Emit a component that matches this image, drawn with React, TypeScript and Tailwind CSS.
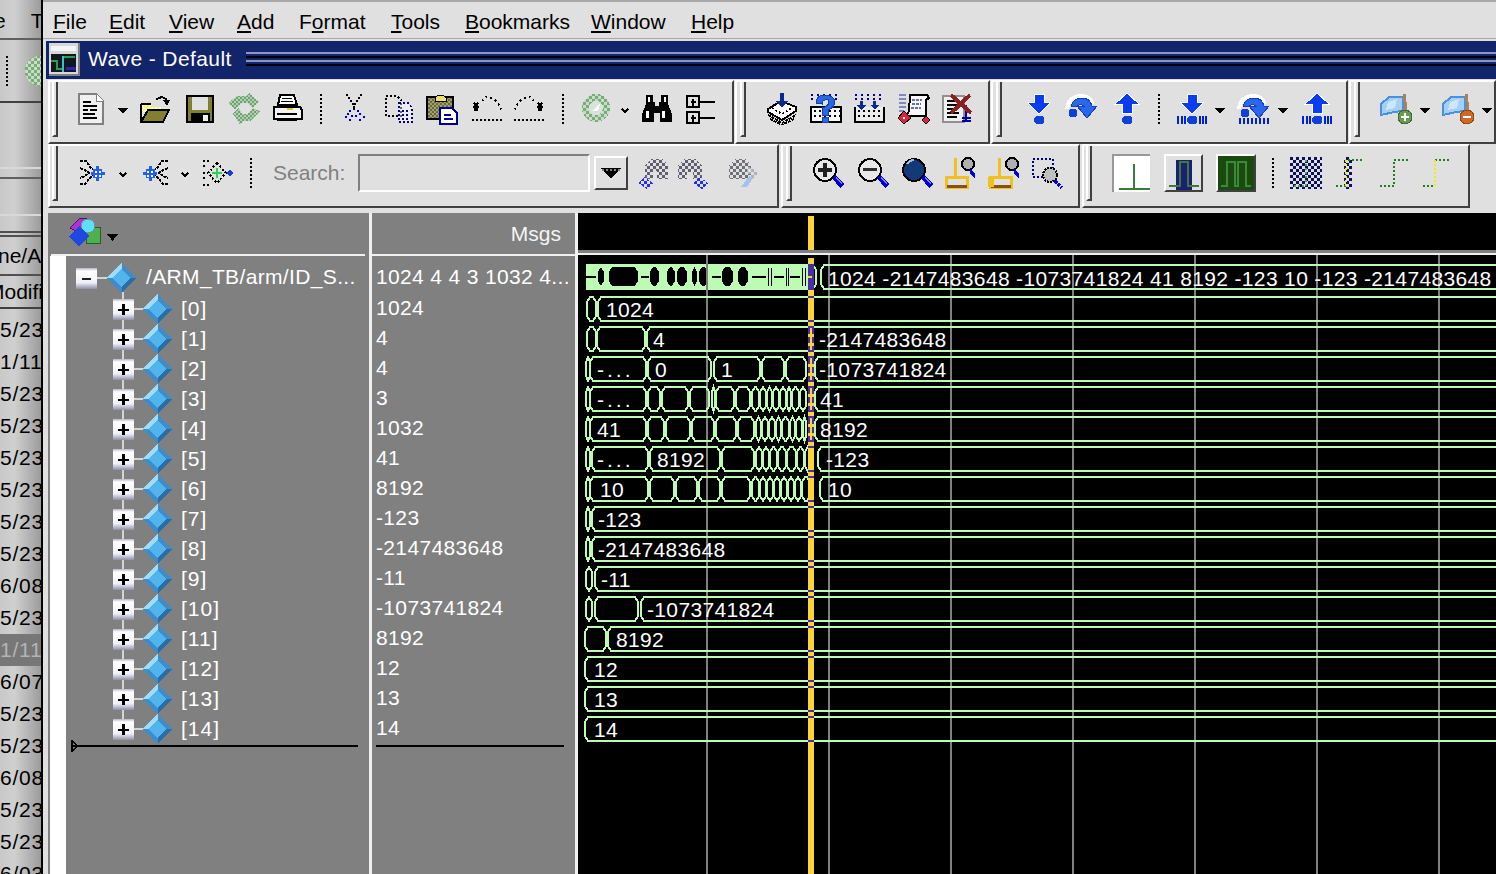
import React from "react";

const K = "#000";
const Pat = ({ id, c, s = 2 }: { id: string; c: string; s?: number }) => (
  <defs>
    <pattern id={id} width={s * 2} height={s * 2} patternUnits="userSpaceOnUse">
      <rect width={s} height={s} fill={c} />
      <rect x={s} y={s} width={s} height={s} fill={c} />
    </pattern>
  </defs>
);

const Ic = ({ className = "", children, w = 32, h = 32 }: { className?: string; children?: React.ReactNode; w?: number; h?: number }) => (
  <svg width={w} height={h} viewBox={`0 0 ${w} ${h}`} shapeRendering="crispEdges" className={`shrink-0 ${className}`}>
    {children}
  </svg>
);
type P = { className?: string };

const Dd = ({ className = "" }: P) => (
  <Ic w={10} h={8} className={`self-center mt-[4px] ${className}`}><path d="M0 1h10L5 7z" fill={K} /></Ic>
);
const DdS = ({ className = "" }: P) => (
  <Ic w={10} h={8} className={`self-center mt-[4px] ${className}`}><path d="M2 2l3 3 3-3" fill="none" stroke={K} strokeWidth="1.5" /></Ic>
);
const Sep = ({ className = "" }: P) => (
  <div className={`w-[2px] h-[30px] border-l-2 border-dotted border-black shrink-0 ${className}`} />
);

const New = (p: P) => (
  <Ic {...p}>
    <path d="M4 1h17l7 7v23H4z" fill="#f0f0f0" stroke="#808080" strokeWidth="2" />
    <path d="M8 8h8v2H8zM8 12h14v2H8zM8 16h5v2H8zM15 16h7v2h-7zM8 20h12v2H8zM8 24h14v2H8z" fill={K} />
    <path d="M21 1v7h7" fill="#fff" stroke="#808080" />
  </Ic>
);
const Open = (p: P) => (
  <Ic {...p}>
    <Pat id="oy" c="#ffff40" />
    <path d="M2 11h10l2 3h8v5H2z" fill="#fff" />
    <path d="M2 11h10l2 3h8v5H2z" fill="url(#oy)" />
    <path d="M2 29l7-12h21l-6 12z" fill="#808030" stroke={K} strokeWidth="2" />
    <path d="M2 11v18M2 11h10" stroke={K} strokeWidth="2" fill="none" />
    <path d="M17 7q5-5 10-1l1 4" stroke={K} strokeWidth="2" fill="none" />
    <path d="M24 7h7l-3 6z" fill={K} />
  </Ic>
);
const Save = (p: P) => (
  <Ic {...p}>
    <rect x="3" y="3" width="26" height="26" fill="#808030" stroke={K} strokeWidth="2" />
    <rect x="8" y="4" width="16" height="13" fill="#e0e0e0" />
    <rect x="7" y="20" width="19" height="9" fill={K} />
    <rect x="19" y="22" width="5" height="6" fill="#f0f0f0" />
  </Ic>
);
const Reload = (p: P) => (
  <Ic {...p}>
    <Pat id="rg" c="#6fa470" />
    <path d="M0 10l9-7h9l3-3 6 6 4 2-7 7-4-5h-7l-6 6z" fill="#b4d0b4" />
    <path d="M0 10l9-7h9l3-3 6 6 4 2-7 7-4-5h-7l-6 6z" fill="url(#rg)" />
    <path d="M4 21l7-6 3 6h5l6-6 7 3-10 10h-7l-3 4-4-7z" fill="#b4d0b4" />
    <path d="M4 21l7-6 3 6h5l6-6 7 3-10 10h-7l-3 4-4-7z" fill="url(#rg)" />
  </Ic>
);
const Print = (p: P) => (
  <Ic {...p}>
    <path d="M8 2h14l3 10H6z" fill="#fff" stroke={K} strokeWidth="2" />
    <path d="M10 5h10M9 8h12" stroke={K} />
    <path d="M2 14h26l2 3v9H2z" fill="#f4f4f4" stroke={K} strokeWidth="2" />
    <path d="M5 20h20v2H5z" fill={K} />
    <rect x="15" y="15" width="6" height="2" fill="#e8c830" />
    <path d="M5 26h20v2H5z" fill={K} />
  </Ic>
);
const Cut = (p: P) => (
  <Ic {...p}>
    <path d="M9 1v2M11 4v2M13 7v2M15 10v2M23 1v2M21 4v2M19 7v2M17 10v2" stroke={K} strokeWidth="2" />
    <path d="M15 13h2v4h-2z" fill={K} />
    <path d="M11 17h2v2h-2zM9 20h2v2H9zM7 23h2v2H7zM11 26h2v2h-2zM13 22h2v2h-2zM19 17h2v2h-2zM21 20h2v2h-2zM25 23h2v2h-2zM21 26h2v2h-2zM17 22h2v2h-2z" fill="#0000c0" />
  </Ic>
);
const Copy = (p: P) => (
  <Ic {...p}>
    <path d="M3 3h11l4 4v16H3z" fill="none" stroke={K} strokeWidth="2" strokeDasharray="2 2" />
    <path d="M16 10h9l4 5v14H16z" fill="#fff" opacity=".4" />
    <path d="M16 10h9l4 5v14H16z" fill="none" stroke="#000080" strokeWidth="2" strokeDasharray="2 2" />
    <path d="M19 18h8M19 22h8M19 26h8" stroke="#000080" strokeWidth="2" strokeDasharray="2 2" />
  </Ic>
);
const Paste = (p: P) => (
  <Ic {...p}>
    <Pat id="pg" c="#6b6b3a" />
    <rect x="1" y="4" width="26" height="22" fill="#a0a070" stroke={K} strokeWidth="2" />
    <rect x="2" y="5" width="24" height="20" fill="url(#pg)" />
    <path d="M9 5l3-3h5l3 3v3H9z" fill="#f0e070" stroke={K} />
    <path d="M14 15h12l5 5v11H14z" fill="#fff" stroke="#000090" strokeWidth="2" />
    <path d="M18 22h7M18 26h9" stroke="#000090" strokeWidth="2" />
  </Ic>
);
const Undo = (p: P) => (
  <Ic {...p}>
    <path d="M3 10l4 4-4 4M7 10l-4 4 4 4" stroke={K} fill="none" strokeWidth="1.5" />
    <path d="M11 8l4-4h4l6 4 4 5 1 4" fill="none" stroke={K} strokeWidth="2" strokeDasharray="2 3" />
    <path d="M1 27h30" stroke={K} strokeWidth="2" strokeDasharray="2 2" />
  </Ic>
);
const Redo = (p: P) => (
  <Ic {...p}>
    <path d="M29 10l-4 4 4 4M25 10l4 4-4 4" stroke={K} fill="none" strokeWidth="1.5" />
    <path d="M21 8l-4-4h-4L7 8l-4 5-1 4" fill="none" stroke={K} strokeWidth="2" strokeDasharray="2 3" />
    <path d="M1 27h30" stroke={K} strokeWidth="2" strokeDasharray="2 2" />
  </Ic>
);
const GreenBall = (p: P) => (
  <Ic {...p}>
    <Pat id="gb" c="#78ad78" s={3} />
    <circle cx="16" cy="15" r="14" fill="#c8dcc8" />
    <circle cx="16" cy="15" r="14" fill="url(#gb)" />
    <circle cx="16" cy="15" r="7" fill="#d8e4d8" />
    <path d="M12 18l8-7-2 7z" fill="#fff" />
  </Ic>
);
const Bino = (p: P) => (
  <Ic {...p}>
    <path d="M5 2h7v7h2v4h4V9h2V2h7v9l4 10v8H19v-9h-6v9H1v-8l4-10z" fill={K} />
    <path d="M7 4h2v5H7zM23 4h2v5h-2zM5 18h3v7H5zM21 18h3v7h-3z" fill="#fff" />
  </Ic>
);
const Grp = (p: P) => (
  <Ic {...p}>
    <rect x="3" y="3" width="12" height="11" fill="none" stroke={K} strokeWidth="2" />
    <rect x="3" y="19" width="12" height="11" fill="none" stroke={K} strokeWidth="2" />
    <path d="M7 8h5v2H7zM8 6h2v7H8zM7 24h5v2H7zM8 22h2v7H8zM15 8h16v2H15zM15 24h16v2H15z" fill={K} />
  </Ic>
);
const Stack = (p: P) => (
  <Ic {...p}>
    <path d="M2 16l13-8 15 6v4l-14 9-14-8z" fill="#fff" stroke={K} strokeWidth="2" />
    <path d="M2 22l14 8 14-8M4 26l12 6 12-6" fill="none" stroke={K} strokeWidth="2" strokeDasharray="3 1" />
    <path d="M6 15l10 6 10-6" fill="none" stroke={K} strokeWidth="2" strokeDasharray="2 2" />
    <path d="M14 0h4v8h4l-6 7-6-7h4z" fill="#0a2a90" />
  </Ic>
);
const Help = (p: P) => (
  <Ic {...p}>
    <path d="M1 14h30v15H1z" fill="#f8f8f8" stroke={K} strokeWidth="2" />
    <path d="M4 18h26M4 23h26" stroke={K} strokeWidth="2" strokeDasharray="2 3" />
    <path d="M1 2h30M1 6h30" stroke="#0000a0" strokeWidth="2" strokeDasharray="2 4" />
    <path d="M6 10q0-8 9-8t10 7q0 5-7 8v5h-6v-7q7-2 7-6t-4-2q-3 0-3 4z" fill="#2a68e0" stroke="#1040b0" />
    <rect x="12" y="24" width="6" height="5" fill="#2a68e0" stroke="#1040b0" />
  </Ic>
);
const Grid = (p: P) => (
  <Ic {...p}>
    <path d="M2 14v15h29V14" fill="#fff" fillOpacity=".4" stroke={K} strokeWidth="2" />
    <path d="M5 18h24M5 23h24" stroke={K} strokeWidth="2" strokeDasharray="2 3" />
    <path d="M2 2h29M2 6h29" stroke="#0000a0" strokeWidth="2" strokeDasharray="2 4" />
    <path d="M7 8h3v4h3l-5 5-4-5h3zM20 8h3v4h3l-4 5-5-5h3z" fill="#0a2a90" />
  </Ic>
);
const Scroll = (p: P) => (
  <Ic {...p}>
    <path d="M1 2h7M1 6h7M1 10h7M1 14h7M1 18h5" stroke="#8088c0" strokeWidth="2" />
    <path d="M12 2h17l2 3-3 2v16H8l3-5z" fill="#f8f8f8" stroke={K} strokeWidth="2" />
    <path d="M14 7h10M14 11h9M13 15h10" stroke="#6070b0" strokeWidth="2" strokeDasharray="3 1" />
    <path d="M0 25l6-7 7 7-7 6zM24 27l4-4 4 4-4 4z" fill="#e02040" stroke={K} />
    <rect x="5" y="24" width="2" height="2" fill="#fff" />
  </Ic>
);
const DelDoc = (p: P) => (
  <Ic {...p}>
    <rect x="1" y="3" width="21" height="26" fill="#f0f0f0" stroke="#909090" strokeWidth="2" />
    <path d="M5 8h10M5 12h14M5 16h8M5 20h12M5 24h10" stroke={K} strokeWidth="2" />
    <path d="M24 12v15M20 25h9M20 28h9" stroke="#0000a0" strokeWidth="2" />
    <path d="M9 2l20 18M28 2L9 20" stroke="#8a2020" strokeWidth="4" />
  </Ic>
);

const ArrowDown = () => (
  <path d="M11 1h10v8h7L16 21 4 9h7z" fill="#0a3cf0" stroke="#fff" strokeWidth="1" />
);
const ArrowUp = () => (
  <path d="M16 0l12 11h-7v9H11v-9H4z" fill="#0a3cf0" stroke="#fff" strokeWidth="1" />
);
const Dot = () => <path d="M13 23h6l2 2v4l-2 2h-6l-2-2v-4z" fill="#1040d8" />;
const Bars = ({ d }: { d: string }) => <path d={d} stroke="#0020e0" strokeWidth="2" />;
const Over = () => (
  <g>
    <path d="M2 16q2-13 14-13 9 0 12 8" fill="none" stroke="#fff" strokeWidth="4" />
    <path d="M6 13q3-8 11-8t10 8h5L22 25l-10-12h7q-4-3-8 1z" fill="#2a66ee" stroke="#1040c0" />
    <circle cx="8" cy="20" r="4.5" fill="#1040d8" />
  </g>
);
const StepD = (p: P) => <Ic {...p}><ArrowDown /><Dot /></Ic>;
const StepO = (p: P) => <Ic {...p}><Over /></Ic>;
const StepU = (p: P) => <Ic {...p}><ArrowUp /><Dot /></Ic>;
const StepDB = (p: P) => <Ic {...p}><ArrowDown /><Dot /><Bars d="M2 23v8M6 23v8M9 23v8M24 23v8M27 23v8M30 23v8" /></Ic>;
const StepOB = (p: P) => <Ic {...p}><Over /><Bars d="M3 25v6M7 25v6M11 25v6M15 25v6M19 25v6M23 25v6M27 25v6M31 25v6" /></Ic>;
const StepUB = (p: P) => <Ic {...p}><ArrowUp /><Dot /><Bars d="M2 23v8M6 23v8M9 23v8M24 23v8M27 23v8M30 23v8" /></Ic>;

const Flag = ({ c, d, minus, className = "" }: { c: string; d: string; minus?: boolean; className?: string }) => (
  <Ic className={className}>
    <path d="M1 11l8-7h14v14l-9 1-13 3z" fill="#a4d0f6" stroke="#4a90e0" strokeWidth="2" />
    <path d="M8 9l9-3-2 9-9 2z" fill="#cce6fa" />
    <path d="M23 1h3l1 16h-3z" fill="#a8825a" />
    <circle cx="25" cy="24" r="7" fill={c} stroke={d} />
    {minus ? <path d="M21 23h8v2h-8z" fill="#fff" /> : <path d="M21 23h8v2h-8zM24 20h2v8h-2z" fill="#fff" />}
  </Ic>
);

const Chev = ({ flip }: { flip?: boolean }) => (
  <g transform={flip ? "translate(32 0) scale(-1 1)" : undefined}>
    <path d="M3 4h6l5 7 4 3M3 11l5 2 4 3-4 3-5 2M3 27h5l5-6 4-3" fill="none" stroke={K} strokeWidth="2" strokeDasharray="3 1" />
    <path d="M16 12h3v-3h3v3h3v3h3v3h-3v3h-3v3h-3v-3h-3v-3h-2v-3h2z" fill="#2060f0" />
    <path d="M18 14h2v2h-2zM22 14h2v2h-2zM18 18h2v2h-2zM22 18h2v2h-2z" fill="#fff" />
  </g>
);
const Merge = (p: P) => <Ic {...p}><Chev /></Ic>;
const Split = (p: P) => <Ic {...p}><Chev flip /></Ic>;
const Third = (p: P) => (
  <Ic {...p}>
    <path d="M2 4h8M2 9h4M2 21h4M2 28h8" stroke={K} strokeWidth="2" strokeDasharray="2 2" />
    <path d="M16 6l9 10-9 10-9-10z" fill="none" stroke={K} strokeWidth="2" strokeDasharray="2 2" />
    <path d="M16 11v10M11 16h10" stroke="#30d050" strokeWidth="2" />
    <path d="M2 16h5" stroke={K} strokeWidth="2" strokeDasharray="2 2" />
    <path d="M25 16l4-3 3 3-3 3z" fill="#1040e0" />
  </Ic>
);
const S1 = (p: P) => (
  <Ic {...p}>
    <Pat id="s1" c="#606070" s={3} /><Pat id="s1b" c="#2030f0" s={3} />
    <path d="M7 8l6-6h11l6 6v14H19v-8h-4v8H7z" fill="url(#s1)" />
    <path d="M0 26l6-6 9 6-6 6z" fill="url(#s1b)" />
  </Ic>
);
const S2 = (p: P) => (
  <Ic {...p}>
    <Pat id="s2" c="#606070" s={3} /><Pat id="s2b" c="#2030f0" s={3} />
    <path d="M2 8l6-6h11l7 6v14h-9v-7h-6v7H2z" fill="url(#s2)" />
    <path d="M17 26l7-6 8 6-6 6z" fill="url(#s2b)" />
  </Ic>
);
const S3 = (p: P) => (
  <Ic {...p}>
    <Pat id="s3" c="#707078" s={3} /><Pat id="s3b" c="#b0b0b8" s={3} />
    <path d="M2 8l6-6h11l5 6v14H2z" fill="url(#s3)" />
    <path d="M20 10l6 1 6 6-8 7v-7h-4z" fill="url(#s3b)" />
    <path d="M14 30l8-11 4 2-6 9z" fill="#a8c0f0" />
  </Ic>
);
const Mag = ({ fill, children, className = "" }: { fill: string; children?: React.ReactNode; className?: string }) => (
  <Ic className={className}>
    <circle cx="13" cy="13" r="11" fill={fill} stroke={K} strokeWidth="2" />
    {children}
    <path d="M20 21l3-3 9 9-4 4z" fill="#0000d0" />
    <path d="M23 21l1-1 6 6-1 1z" fill="#8080e0" />
  </Ic>
);
const ZoomPlus = (p: P) => (
  <Mag fill="#e8e8e8" className={p.className}><path d="M6 11h14v4H6zM11 6h4v14h-4z" fill="#202020" /></Mag>
);
const ZoomMinus = (p: P) => (
  <Mag fill="#e8e8e8" className={p.className}><path d="M6 11h14v3H6z" fill="#303030" /></Mag>
);
const ZoomFull = (p: P) => (
  <Mag fill="#123a78" className={p.className}><path d="M6 7q3-4 7-4" stroke="#a0b8e0" strokeWidth="2" fill="none" /></Mag>
);
const YT = ({ a, className = "" }: { a?: boolean; className?: string }) => (
  <Ic className={className}>
    <path d="M10 1h3v19h-3z" fill="#f0c020" />
    <rect x="2" y="20" width="21" height="10" fill="none" stroke="#f0c020" strokeWidth="3" />
    <path d="M3 29h20" stroke="#8a5010" strokeWidth="3" />
    <circle cx="24" cy="7" r="6" fill="#b0b0b0" stroke={K} strokeWidth="2" />
    <path d="M26 12l5 5v4l-5-4z" fill="#0000e0" />
    {a && <path d="M0 20h6v10H0z" fill="#f0c020" />}
  </Ic>
);
const Marq = (p: P) => (
  <Ic {...p}>
    <rect x="2" y="2" width="20" height="18" fill="none" stroke="#000090" strokeWidth="2" strokeDasharray="2 2" />
    <circle cx="19" cy="18" r="7" fill="#c0c0c0" stroke={K} strokeWidth="2" strokeDasharray="2 1" />
    <path d="M24 24l7 7" stroke="#0000e0" strokeWidth="3" strokeDasharray="3 1" />
  </Ic>
);
const DotsA = (p: P) => (
  <Ic {...p}>
    <Pat id="da" c="#101060" s={3} />
    <rect width="32" height="32" fill="url(#da)" />
    <path d="M16 3v26H2" stroke="#50a050" strokeWidth="2" strokeDasharray="2 2" fill="none" />
  </Ic>
);
const DotsB = (p: P) => (
  <Ic {...p}>
    <Pat id="db" c="#101060" s={3} />
    <rect x="10" y="0" width="8" height="32" fill="url(#db)" />
    <path d="M2 29h10M14 3h16" stroke="#208020" strokeWidth="2" strokeDasharray="2 2" />
    <path d="M12 3v27" stroke="#f0f000" strokeWidth="2" strokeDasharray="2 2" />
  </Ic>
);
const DotsC = (p: P) => (
  <Ic {...p}><path d="M2 29h14V3h16" fill="none" stroke="#208020" strokeWidth="2" strokeDasharray="2 2" /></Ic>
);
const DotsD = (p: P) => (
  <Ic {...p}>
    <path d="M2 29h12M14 3h16" stroke="#208020" strokeWidth="2" strokeDasharray="2 2" />
    <path d="M14 3v26" stroke="#f0f000" strokeWidth="2" strokeDasharray="2 2" />
  </Ic>
);

const Handle = ({ className = "" }: P) => (
  <div className={`w-[6px] h-[55px] shrink-0 border-l-2 border-white border-r-2 border-r-[#404040] border-b-2 border-b-[#404040] ${className}`} />
);
const grp = "flex items-center pb-[6px] border-t-2 border-l-2 border-t-white border-l-white border-b-2 border-r-2 border-b-[#404040] border-r-[#404040] shrink-0 overflow-hidden";

const Left = () => {
  const dates = ["5/23","1/11","5/23","5/23","5/23","5/23","5/23","5/23","6/08","5/23","1/11","6/07","5/23","5/23","6/08","5/23","5/23","6/03"];
  return (
    <div className="w-[41px] h-[874px] shrink-0 overflow-hidden flex flex-col text-[21px] text-black bg-[linear-gradient(90deg,#c8c8c8,#d0d0d0_35%,#9c9c9c)]">
      <div className="h-[40px] shrink-0 pt-[3px] flex items-center whitespace-nowrap border-b-2 border-[#606060]">
        <span className="-ml-[6px]">e</span>
        <span className="ml-[25px]">T</span>
      </div>
      <div className="h-[63px] shrink-0 flex items-center border-b-2 border-[#404040]">
        <Sep className="ml-[6px]" />
        <Ic w={16} h={32} className="ml-[17px]">
          <Pat id="lg" c="#78ad78" s={3} />
          <circle cx="15" cy="16" r="15" fill="#c8dcc8" />
          <circle cx="15" cy="16" r="15" fill="url(#lg)" />
        </Ic>
      </div>
      <div className="h-[66px] shrink-0 border-b-2 border-[#d8d8d8]" />
      <div className="h-[10px] shrink-0 border-b-2 border-[#606060]" />
      <div className="h-[37px] shrink-0 border-b-2 border-[#d8d8d8]" />
      <div className="h-[17px] shrink-0 border-b-2 border-[#505050]" />
      <div className="h-[4px] shrink-0 border-b-2 border-[#505050]" />
      <div className="h-[39px] shrink-0 flex items-center whitespace-nowrap border-b-2 border-[#505050]"><span className="-ml-[2px]">ne/Al</span></div>
      <div className="h-[33px] shrink-0 flex items-center whitespace-nowrap border-b-2 border-[#404040]"><span className="-ml-[13px]">Modifi</span></div>
      <div className="pt-[5px] shrink-0 flex flex-col tracking-[0.8px]">
        {dates.map((d, i) => (
          <div key={i} className={`h-[32px] shrink-0 leading-[32px] whitespace-nowrap ${i === 10 ? "bg-[#777777] text-[#b4b4b4]" : ""}`}>{d}/2</div>
        ))}
      </div>
    </div>
  );
};

const Menu = () => {
  const items: [string, string, string, string][] = [
    ["", "F", "ile", "w-[56px]"],
    ["", "E", "dit", "w-[60px]"],
    ["", "V", "iew", "w-[68px]"],
    ["", "A", "dd", "w-[62px]"],
    ["F", "o", "rmat", "w-[92px]"],
    ["", "T", "ools", "w-[74px]"],
    ["", "B", "ookmarks", "w-[126px]"],
    ["", "W", "indow", "w-[100px]"],
    ["", "H", "elp", "w-[60px]"],
  ];
  return (
    <div className="h-[38px] pt-[3px] flex items-center pl-[10px] text-[21px] text-black bg-[#e0e0e0] border-t-2 border-[#a8a8a8]">
      {items.map(([a, u, b, w]) => (
        <span key={u + b} className={`${w} whitespace-nowrap`}>{a}<u className="underline-offset-2">{u}</u>{b}</span>
      ))}
    </div>
  );
};

const Title = () => (
  <div className="h-[38px] ml-[3px] mt-[2px] flex items-center bg-[#12256a] overflow-hidden border-b-2 border-[#12256a]">
    <div className="w-[31px] h-[33px] ml-[3px] shrink-0 bg-[#d8d8d8] border-r-2 border-b-2 border-[#808080]">
      <div className="h-[5px] bg-[#f4f4f4] mx-[2px] mt-[3px]" />
      <Ic w={25} h={18} className="ml-[2px] mt-[3px]">
        <rect width="25" height="18" fill="#101820" />
        <path d="M0 7h6v8h6V3h12" fill="none" stroke="#2f9a50" strokeWidth="2" />
        <path d="M12 2v16" stroke="#40c0c0" strokeWidth="2" />
        <path d="M15 14h10" stroke="#3020c0" strokeWidth="3" />
      </Ic>
    </div>
    <span className="ml-[8px] w-[158px] text-[21px] tracking-[0.4px] text-white whitespace-nowrap shrink-0">Wave - Default</span>
    <div className="flex-1 flex flex-col">
      <div className="h-[2px] bg-[#8a96c4]" />
      <div className="h-[2px] mt-[2px] bg-black" />
      <div className="h-[2px] mt-[2px] bg-[#8a96c4]" />
      <div className="h-[2px] mt-[2px] bg-black" />
    </div>
  </div>
);

const Row1 = () => (
  <div className="h-[64px] flex pl-[5px] mt-[1px]">
    <div className={`w-[686px] ${grp}`}>
      <Handle className="ml-[2px]" />
      <New className="ml-[17px]" /><Dd className="ml-[11px]" /><Open className="ml-[11px]" /><Save className="ml-[13px]" />
      <Reload className="ml-[12px]" /><Print className="ml-[12px]" /><Sep className="ml-[16px]" /><Cut className="ml-[16px]" />
      <Copy className="ml-[13px]" /><Paste className="ml-[11px]" /><Undo className="ml-[13px]" /><Redo className="ml-[10px]" />
      <Sep className="ml-[17px]" /><GreenBall className="ml-[16px]" /><DdS className="ml-[8px]" /><Bino className="ml-[11px]" /><Grp className="ml-[11px]" />
    </div>
    <div className={`w-[255px] ml-[1px] ${grp}`}>
      <Handle className="ml-[3px]" />
      <Stack className="ml-[20px]" /><Help className="ml-[12px]" /><Grid className="ml-[11px]" /><Scroll className="ml-[13px]" /><DelDoc className="ml-[12px]" />
    </div>
    <div className={`w-[357px] ml-[1px] ${grp}`}>
      <Handle className="ml-[3px]" />
      <StepD className="ml-[21px]" /><StepO className="ml-[10px]" /><StepU className="ml-[14px]" /><Sep className="ml-[15px]" />
      <StepDB className="ml-[16px]" /><Dd className="ml-[7px]" /><StepOB className="ml-[12px]" /><Dd className="ml-[9px]" /><StepUB className="ml-[13px]" />
    </div>
    <div className={`flex-1 ml-[1px] ${grp} border-r-0`}>
      <Handle className="ml-[3px]" />
      <Flag c="#6a9a50" d="#3f6a30" className="ml-[20px]" /><Dd className="ml-[8px]" />
      <Flag c="#d0682a" d="#90481a" minus className="ml-[12px]" /><Dd className="ml-[8px]" />
    </div>
  </div>
);

const Row2 = () => (
  <div className="h-[64px] flex pl-[5px]">
    <div className={`w-[731px] ${grp}`}>
      <Handle className="ml-[2px]" />
      <Merge className="ml-[19px]" /><DdS className="ml-[9px]" /><Split className="ml-[11px]" /><DdS className="ml-[9px]" /><Third className="ml-[11px]" />
      <Sep className="ml-[17px]" />
      <span className="ml-[21px] w-[85px] shrink-0 text-[21px] text-[#808080]">Search:</span>
      <div className="w-[232px] h-[38px] shrink-0 border-t-2 border-l-2 border-[#808080] border-b-2 border-r-2 border-b-white border-r-white" />
      <div className="ml-[4px] w-[34px] h-[34px] shrink-0 flex items-center justify-center self-center border-t-2 border-l-2 border-white border-b-2 border-r-2 border-b-[#404040] border-r-[#404040]">
        <Ic w={22} h={10}><path d="M0 0h22L11 10z" fill={K} /><path d="M2 1h2v2H2zM6 1h2v2H6zM10 1h2v2h-2zM14 1h2v2h-2zM18 1h2v2h-2z" fill="#808080" /></Ic>
      </div>
      <S1 className="ml-[10px]" /><S2 className="ml-[6px]" /><S3 className="ml-[19px]" />
    </div>
    <div className={`w-[299px] ml-[2px] ${grp}`}>
      <Handle className="ml-[3px]" />
      <ZoomPlus className="ml-[20px]" /><ZoomMinus className="ml-[13px]" /><ZoomFull className="ml-[12px]" />
      <YT className="ml-[11px]" /><YT a className="ml-[12px]" /><Marq className="ml-[11px]" />
    </div>
    <div className={`w-[388px] ml-[2px] ${grp}`}>
      <Handle className="ml-[2px]" />
      <div className="ml-[20px] border-t-2 border-l-2 border-[#989898]">
        <Ic w={36} h={36} className="block">
          <rect width="36" height="36" fill="#fff" />
          <path d="M5 33h31M20 33V8" fill="none" stroke="#3a7a3a" strokeWidth="2" />
        </Ic>
      </div>
      <div className="ml-[14px] border-b-2 border-r-2 border-[#404040] border-t-2 border-l-2 border-t-white border-l-white">
        <Ic w={35} h={34} className="block">
          <rect x="10" y="4" width="16" height="30" fill="#1a1f70" />
          <path d="M3 30h11V6h8v24h11" fill="none" stroke="#3a7a3a" strokeWidth="2" />
        </Ic>
      </div>
      <div className="ml-[13px] border-b-2 border-r-2 border-[#404040] border-t-2 border-l-2 border-t-white border-l-white">
        <Ic w={36} h={34} className="block">
          <rect width="36" height="34" fill="#1a4a10" />
          <path d="M3 30h6V6h8v24h3V6h8v24h5" fill="none" stroke="#3a8a3a" strokeWidth="2" />
        </Ic>
      </div>
      <Sep className="ml-[16px]" />
      <DotsA className="ml-[16px]" /><DotsB className="ml-[12px]" /><DotsC className="ml-[12px]" /><DotsD className="ml-[11px]" />
    </div>
  </div>
);

const Diamond = () => (
  <Ic w={29} h={30} className="shrink-0">
    <path d="M14.5 0L29 15H14.5z" fill="#3f8ccb" />
    <path d="M14.5 0L0 15h14.5z" fill="#9edcf8" />
    <path d="M0 15l14.5 15V15z" fill="#3d8ccb" />
    <path d="M29 15L14.5 30V15z" fill="#2b6ea5" />
    <path d="M14.5 6L23 15l-8.5 9L6 15z" fill="#52b4ec" />
  </Ic>
);
const Expander = ({ minus }: { minus?: boolean }) => (
  <div className="w-[21px] h-[21px] shrink-0 flex items-center justify-center bg-[linear-gradient(180deg,#b4b4cc_0,#fff_14%,#f0f0f8_70%,#8e8ea8)]">
    <Ic w={13} h={13}>
      <path d={minus ? "M2 6h9v2H2z" : "M1 6h11v2H1zM5 1h3v11H5z"} fill={minus ? "#202020" : K} />
    </Ic>
  </div>
);

const SigRow = ({ label }: { label: string }) => (
  <div className="h-[30px] flex items-center pl-[47px]">
    <Expander />
    <div className="w-[9px] h-[2px] bg-[#d4d4d4]" />
    <Diamond />
    <span className="ml-[9px] text-white tracking-[1px]">{label}</span>
  </div>
);

const vals = ["1024","4","4","3","1032","41","8192","-123","-2147483648","-11","-1073741824","8192","12","13","14"];

const TreePane = () => (
  <div className="w-[320px] shrink-0 bg-[#808080] flex flex-col">
    <div className="h-[41px] flex items-center pl-[20px]">
      <Ic w={36} h={36}>
        <path d="M2 12L12 2h6l2 3L8 15z" fill="#b030d0" stroke="#501070" />
        <rect x="18" y="11" width="14" height="16" fill="#50b050" stroke="#206020" />
        <circle cx="20" cy="10" r="7" fill="#60e0f8" stroke="#7090a0" />
        <path d="M11 10l10 10-10 11L1 20z" fill="#2048e0" />
      </Ic>
      <Ic w={11} h={7} className="mt-[8px] ml-[3px]"><path d="M0 0h11L5.5 7z" fill={K} /></Ic>
    </div>
    <div className="h-[2px] ml-[3px] mr-[3px] bg-[#f0f0f0]" />
    <div className="flex-1 flex">
      <div className="ml-[2px] w-[16px] bg-white shrink-0" />
      <div className="relative flex-1 pt-[6px] text-[21px]">
        <div className="absolute left-[56px] top-[36px] w-[2px] h-[440px] bg-[#d4d4d4]" />
        <div className="relative h-[32px] flex items-center pl-[10px]">
          <Expander minus />
          <div className="w-[10px] h-[2px] bg-[#d4d4d4]" />
          <Diamond />
          <span className="ml-[10px] pb-[2px] text-white whitespace-nowrap tracking-[0.35px]">/ARM_TB/arm/ID_S...</span>
        </div>
        <div className="relative">
          {vals.map((_, i) => <SigRow key={i} label={`[${i}]`} />)}
        </div>
        <div className="ml-[6px] w-[286px] h-[2px] mt-[1px] bg-black relative">
          <Ic w={8} h={12} className="absolute -left-[1px] -top-[5px]"><path d="M1 1l6 5-6 5z" fill="none" stroke={K} strokeWidth="1.5" /></Ic>
        </div>
      </div>
    </div>
  </div>
);

const ValuesPane = () => (
  <div className="w-[203px] shrink-0 bg-[#808080] flex flex-col text-[21px] text-white">
    <div className="h-[41px] flex items-center justify-end pr-[14px] text-[#f4f4f4]">Msgs</div>
    <div className="h-[2px] bg-[#f0f0f0]" />
    <div className="pt-[6px] pl-[4px] tracking-[0.35px]">
      <div className="h-[32px] leading-[30px] whitespace-nowrap">1024 4 4 3 1032 4...</div>
      {vals.map((v, i) => <div key={i} className="h-[30px] leading-[28px]">{v}</div>)}
      <div className="w-[188px] h-[2px] mt-[1px] bg-black" />
    </div>
  </div>
);

const G = "#bdfbb5";
const C = "#fbd33b";
const V = "#4a2ea6";
type Seg = [number, number];
const sp = (xs: number[]): Seg[] => xs.slice(0, -1).map((x, i) => [x, xs[i + 1] - 1] as Seg);
const rows: { segs: Seg[]; t: [number, string][] }[] = [
  { segs: [[587, 596], [598, 1510]], t: [[606, "1024"]] },
  { segs: [[587, 596], [597, 645], [647, 1510]], t: [[653, "4"], [819, "-2147483648"]] },
  { segs: [[586, 590], [590, 646], [648, 711], [714, 760], [762, 784], [786, 806], [815, 1510]], t: [[597, "-..."], [655, "0"], [721, "1"], [819, "-1073741824"]] },
  { segs: [[586, 590], [590, 646], [648, 660], [662, 688], [690, 709], [712, 715], [716, 734], [736, 750], ...sp([752, 760, 767, 773, 780, 787, 792, 800, 807]), [815, 1510]], t: [[597, "-..."], [820, "41"]] },
  { segs: [[586, 590], [590, 646], [648, 664], [666, 690], [692, 714], [716, 736], [738, 754], ...sp([756, 762, 769, 776, 782, 790, 796, 803, 807]), [815, 1510]], t: [[597, "41"], [820, "8192"]] },
  { segs: [[586, 590], [592, 648], [650, 720], [722, 754], ...sp([756, 763, 770, 778, 787, 797, 805, 811]), [818, 1510]], t: [[597, "-..."], [657, "8192"], [826, "-123"]] },
  { segs: [[586, 590], [590, 648], [650, 674], [676, 697], [699, 720], [722, 750], ...sp([752, 760, 767, 774, 781, 788, 795, 802, 811]), [820, 1510]], t: [[600, "10"], [828, "10"]] },
  { segs: [[586, 590], [592, 1510]], t: [[598, "-123"]] },
  { segs: [[586, 590], [592, 1510]], t: [[598, "-2147483648"]] },
  { segs: [[586, 592], [595, 1510]], t: [[601, "-11"]] },
  { segs: [[586, 592], [595, 638], [641, 1510]], t: [[647, "-1073741824"]] },
  { segs: [[585, 606], [608, 1510]], t: [[616, "8192"]] },
  { segs: [[585, 1510]], t: [[594, "12"]] },
  { segs: [[585, 1510]], t: [[594, "13"]] },
  { segs: [[585, 1510]], t: [[594, "14"]] },
];
const hex = (a: number, b: number, top: number, bot: number) => {
  const ch = Math.min(3, (b - a) / 2);
  const m1 = top + 5, m2 = bot - 5;
  return `M${a + ch} ${top}H${b - ch}L${b} ${m1}V${m2}L${b - ch} ${bot}H${a + ch}L${a} ${m2}V${m1}Z`;
};
const blackTop: Seg[] = [[598, 604], [609, 638], [650, 659], [667, 675], [677, 687], [692, 697], [699, 708], [722, 733], [738, 748]];
const dashes: Seg[] = [[586, 596], [641, 649], [712, 721], [752, 766], [774, 784], [790, 800]];
const slivers: number[] = [768, 771, 786, 788, 802, 805];

const WaveCanvas = () => (
  <svg width="918" height="619" viewBox="578 255 918 619" shapeRendering="crispEdges" className="block">
    <rect x="586" y="264" width="222" height="26" fill={G} />
    {blackTop.map(([a, b]) => <path key={a} d={hex(a, b, 267, 286)} fill="#000" />)}
    {dashes.map(([a, b]) => <rect key={a} x={a} y="276" width={b - a} height="2" fill="#000" />)}
    {slivers.map((x) => <rect key={x} x={x} y="268" width="1" height="18" fill="#000" />)}
    {[707, 829, 951, 1073, 1195, 1317, 1439].map((x) => (
      <rect key={x} x={x - 1} y="255" width="2" height="619" fill="#808080" />
    ))}
    <path d={hex(808, 816, 265, 289)} fill="none" stroke={G} strokeWidth="2" />
    <path d={hex(821, 1510, 265, 289)} fill="none" stroke={G} strokeWidth="2" />
    {rows.map((r, i) => {
      const top = 297 + 30 * i;
      const bot = 321 + 30 * i;
      return (
        <g key={i}>
          {r.segs.map(([a, b]) => <path key={a} d={hex(a, b, top, bot)} fill="none" stroke={G} strokeWidth="2" />)}
        </g>
      );
    })}
    <rect x="808" y="258" width="6" height="616" fill={C} />
    <rect x="808" y="264" width="6" height="26" fill={V} />
    <rect x="808" y="276" width="4" height="2" fill={C} />
    {rows.map((_, i) => (
      <g key={i}>
        <rect x="808" y={296 + 30 * i} width="6" height="2" fill={V} />
        <rect x="808" y={320 + 30 * i} width="6" height="2" fill={V} />
        {i >= 1 && i <= 4 && (
          <path d={`M809 ${298 + 30 * i}V${320 + 30 * i}M813 ${298 + 30 * i}V${320 + 30 * i}`} stroke={V} strokeWidth="2" strokeDasharray="6 3" />
        )}
      </g>
    ))}
    <g fontFamily="'Liberation Sans', Arial, sans-serif" fontSize="21" letterSpacing="0.35" fill="#fff" shapeRendering="auto">
      <text x="828" y="286">1024 -2147483648 -1073741824 41 8192 -123 10 -123 -2147483648</text>
      {rows.map((r, i) => r.t.map(([x, s]) => (
        <text key={x} x={x} y={317 + 30 * i} letterSpacing={s === "-..." ? 3 : 0.35}>{s}</text>
      )))}
    </g>
  </svg>
);

const WavePane = () => (
  <div className="flex-1 flex flex-col bg-black overflow-hidden">
    <div className="h-[36px] mt-[1px] bg-black pl-[230px] pt-[2px]">
      <div className="w-[6px] h-[34px] bg-[#fbd33b]" />
    </div>
    <div className="h-[3px] bg-[#808080]" />
    <div className="h-[2px] bg-[#f0f0f0]" />
    <WaveCanvas />
  </div>
);

export default function App() {
  return (
    <div className="w-[1496px] h-[874px] flex overflow-hidden bg-[#e0e0e0] font-['Liberation_Sans',Arial,sans-serif]">
      <Left />
      <div className="w-[2px] bg-black shrink-0" />
      <div className="flex-1 min-w-0 flex flex-col bg-[#e0e0e0]">
        <Menu />
        <div className="h-[1px] bg-[#a8a8a8]" />
        <Title />
        <Row1 />
        <Row2 />
        <div className="h-[5px]" />
        <div className="flex-1 min-h-0 flex pl-[5px]">
          <TreePane />
          <div className="w-[4px] shrink-0 flex"><div className="w-[1px] bg-[#808080]" /><div className="w-[3px] bg-[#f0f0f0]" /></div>
          <ValuesPane />
          <div className="w-[3px] shrink-0 bg-[#f0f0f0]" />
          <WavePane />
        </div>
      </div>
    </div>
  );
}
